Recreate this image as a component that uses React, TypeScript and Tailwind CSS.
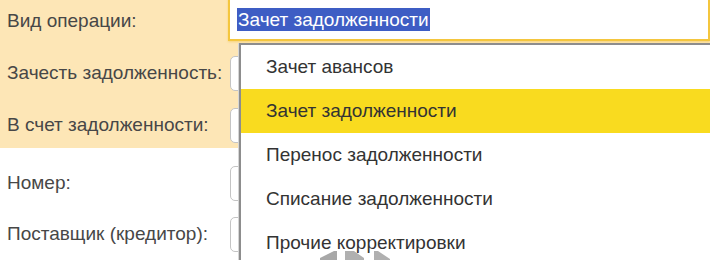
const items = [
  'Зачет авансов',
  'Зачет задолженности',
  'Перенос задолженности',
  'Списание задолженности',
  'Прочие корректировки',
];

function Stub() {
  return <div className="ml-[2px] h-[35px] flex-1 rounded-[5px] border border-[#c4c4c4] bg-white" />;
}

function Row({ label, className, children }: { label: string; className: string; children?: React.ReactNode }) {
  return (
    <div className={`flex items-center ${className}`}>
      <div className="w-[228px] shrink-0 pl-[7px] whitespace-nowrap">{label}</div>
      {children ?? <Stub />}
    </div>
  );
}

export default function App() {
  return (
    <div
      className="relative h-[260px] w-[710px] overflow-hidden bg-white text-[19px] text-[#474747]"
      style={{ fontFamily: '"Liberation Sans", Arial, sans-serif' }}
    >
      <div className="flex h-[148px] flex-col bg-[#fde6b6]">
        <Row label="Вид операции:" className="h-[42px]">
          <div className="-mt-[3px] flex h-[43px] flex-1 items-center border-2 border-[#f4c63e] bg-white pl-[7px] shadow-[0_1px_2px_#f7d47a]">
            <span className="bg-[#3e5dc4] px-[1px] leading-[23px] text-white">Зачет задолженности</span>
          </div>
        </Row>
        <Row label="Зачесть задолженность:" className="mt-[9px] h-[44px]" />
        <Row label="В счет задолженности:" className="mt-[8px] h-[44px]" />
      </div>
      <div className="flex flex-col">
        <Row label="Номер:" className="mt-[13px] h-[44px]" />
        <Row label="Поставщик (кредитор):" className="mt-[7px] h-[44px]" />
      </div>

      <div className="absolute left-[239px] right-0 top-[43px] h-[240px] border-l-2 border-t-2 border-[#8d8d8d] bg-white shadow-[-1px_0_0_#d6d6d6]">
        {items.map((it, i) => (
          <div
            key={it}
            className={`flex h-[44px] items-center pl-[25px] text-[#333] ${i === 1 ? 'bg-[#f9db1f]' : ''}`}
          >
            {it}
          </div>
        ))}
      </div>

      <svg className="absolute left-[318px] top-[250px]" width="76" height="10" viewBox="0 0 76 10">
        <polygon points="2,8 16,1 19,1 19,10 2,10" fill="#a8a8a8" />
        <polygon points="27,1 36,1 46,8 46,10 27,10" fill="#b0b0b0" />
        <polygon points="56,1 60,1 72,9 72,10 56,10" fill="#b0b0b0" />
      </svg>
    </div>
  );
}
